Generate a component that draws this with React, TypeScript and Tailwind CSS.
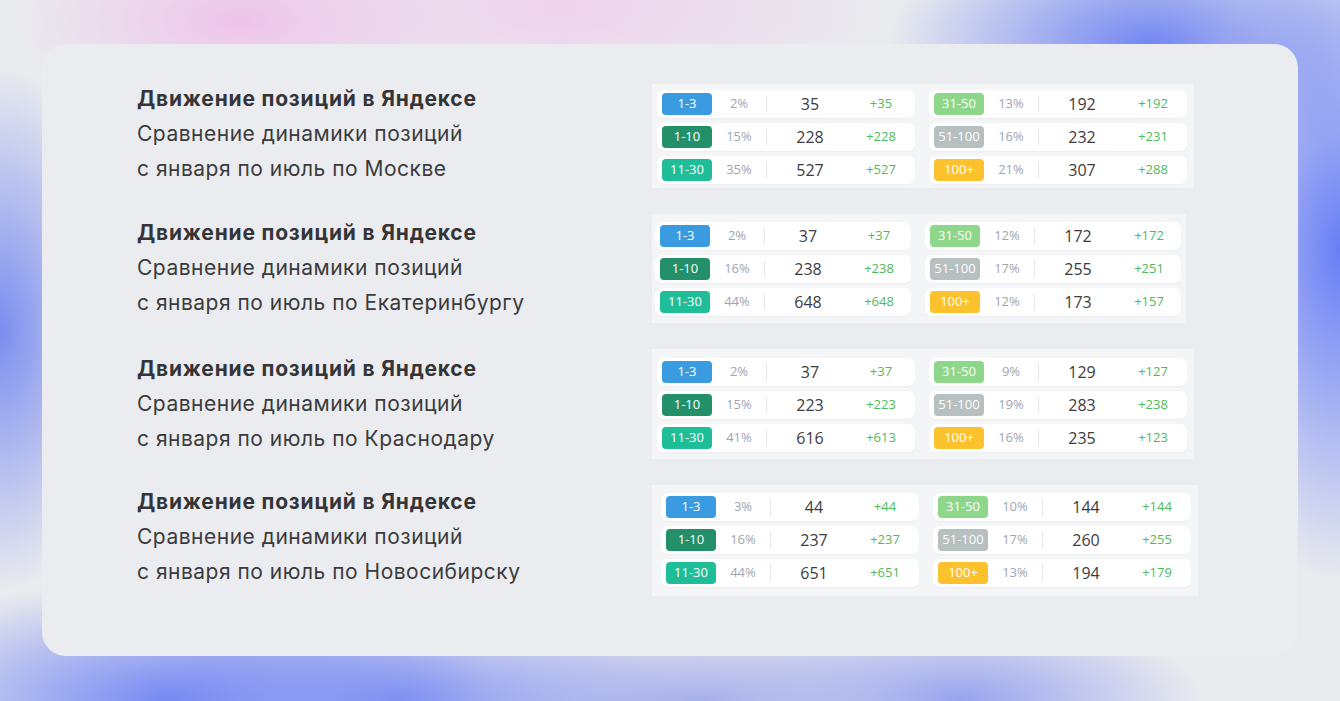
import React from 'react'

type Row = { range: string; pct: string; value: string; delta: string }

type Block = {
  city: string
  width: string
  pad: string
  textOffset: string
  left: Row[]
  right: Row[]
}

const badgeColors: Record<string, string> = {
  '1-3': 'bg-[#3a9be0]',
  '1-10': 'bg-[#24906a]',
  '11-30': 'bg-[#1fbe99]',
  '31-50': 'bg-[#8ed68a]',
  '51-100': 'bg-[#b6c0c0]',
  '100+': 'bg-[#fcc22e]',
}

const blocks: Block[] = [
  {
    city: 'с января по июль по Москве',
    width: 'w-[542px]',
    pad: 'pl-[5px] pr-[7px] pt-[6px] pb-[4px]',
    textOffset: '-mt-[3px]',
    left: [
      { range: '1-3', pct: '2%', value: '35', delta: '+35' },
      { range: '1-10', pct: '15%', value: '228', delta: '+228' },
      { range: '11-30', pct: '35%', value: '527', delta: '+527' },
    ],
    right: [
      { range: '31-50', pct: '13%', value: '192', delta: '+192' },
      { range: '51-100', pct: '16%', value: '232', delta: '+231' },
      { range: '100+', pct: '21%', value: '307', delta: '+288' },
    ],
  },
  {
    city: 'с января по июль  по Екатеринбургу',
    width: 'w-[534px]',
    pad: 'pl-[3px] pr-[5px] pt-[8px] pb-[7px]',
    textOffset: 'mt-[1px]',
    left: [
      { range: '1-3', pct: '2%', value: '37', delta: '+37' },
      { range: '1-10', pct: '16%', value: '238', delta: '+238' },
      { range: '11-30', pct: '44%', value: '648', delta: '+648' },
    ],
    right: [
      { range: '31-50', pct: '12%', value: '172', delta: '+172' },
      { range: '51-100', pct: '17%', value: '255', delta: '+251' },
      { range: '100+', pct: '12%', value: '173', delta: '+157' },
    ],
  },
  {
    city: 'с января по июль по Краснодару',
    width: 'w-[542px]',
    pad: 'pl-[5px] pr-[7px] pt-[9px] pb-[7px]',
    textOffset: 'mt-[2px]',
    left: [
      { range: '1-3', pct: '2%', value: '37', delta: '+37' },
      { range: '1-10', pct: '15%', value: '223', delta: '+223' },
      { range: '11-30', pct: '41%', value: '616', delta: '+613' },
    ],
    right: [
      { range: '31-50', pct: '9%', value: '129', delta: '+127' },
      { range: '51-100', pct: '19%', value: '283', delta: '+238' },
      { range: '100+', pct: '16%', value: '235', delta: '+123' },
    ],
  },
  {
    city: 'с января по июль по Новосибирску',
    width: 'w-[546px]',
    pad: 'pl-[9px] pr-[7px] pt-[8px] pb-[9px]',
    textOffset: '-mt-[1px]',
    left: [
      { range: '1-3', pct: '3%', value: '44', delta: '+44' },
      { range: '1-10', pct: '16%', value: '237', delta: '+237' },
      { range: '11-30', pct: '44%', value: '651', delta: '+651' },
    ],
    right: [
      { range: '31-50', pct: '10%', value: '144', delta: '+144' },
      { range: '51-100', pct: '17%', value: '260', delta: '+255' },
      { range: '100+', pct: '13%', value: '194', delta: '+179' },
    ],
  },
]

const StatRow = ({ row }: { row: Row }) => {
  return (
    <div className="flex h-[28px] items-center rounded-[7px] bg-white pl-[5px] shadow-[0_1px_2px_rgba(0,0,0,0.04)]">
      <span
        className={`${badgeColors[row.range]} flex h-[22px] w-[50px] shrink-0 items-center justify-center rounded-[4px] text-[13px] font-medium text-white`}
      >
        {row.range}
      </span>
      <span className="w-[54px] text-center text-[13px] text-[#a0a5b0]">{row.pct}</span>
      <span className="h-[16px] w-px bg-[#e3e5e9]" />
      <span className="-mt-px w-[86px] text-center text-[16px] text-[#3c3c3e]">{row.value}</span>
      <span className="w-[56px] text-center text-[13px] text-[#4fba5a]">{row.delta}</span>
    </div>
  )
}

const StatColumn = ({ rows }: { rows: Row[] }) => {
  return (
    <div className="flex flex-1 flex-col gap-[5px]">
      {rows.map((row, index) => (
        <StatRow key={index} row={row} />
      ))}
    </div>
  )
}

const PositionBlock = ({ block }: { block: Block }) => {
  return (
    <div className="flex items-start">
      <div
        className={`${block.textOffset} w-[515px] shrink-0 text-[21px] leading-[35px] tracking-[0.5px] text-[#3b3b3d]`}
      >
        <div className="text-[21px] font-bold tracking-[0.8px] text-[#353537]">
          Движение позиций в Яндексе
        </div>
        <div>Сравнение динамики позиций</div>
        <div>{block.city}</div>
      </div>
      <div
        className={`${block.width} ${block.pad} flex gap-[14px] bg-[#f4f5f7] font-['Open_Sans',sans-serif]`}
      >
        <StatColumn rows={block.left} />
        <StatColumn rows={block.right} />
      </div>
    </div>
  )
}

export default function App() {
  return (
    <div className="h-[701px] w-full overflow-hidden bg-[#e9eaee] bg-[radial-gradient(ellipse_220px_100px_at_240px_20px,#eec4ea_0%,transparent_100%),radial-gradient(ellipse_320px_110px_at_560px_10px,#eed2ec_0%,transparent_100%),radial-gradient(ellipse_260px_130px_at_1150px_45px,#7286f2_0%,transparent_100%),radial-gradient(ellipse_150px_330px_at_1340px_250px,#687ef6_0%,transparent_100%),radial-gradient(ellipse_130px_260px_at_0px_330px,#7a8def_0%,transparent_100%),radial-gradient(ellipse_320px_120px_at_170px_700px,#7789f3_0%,transparent_100%),radial-gradient(ellipse_280px_100px_at_400px_700px,#8393f2_0%,transparent_100%),radial-gradient(ellipse_240px_90px_at_700px_705px,#a4adeb_0%,transparent_100%),radial-gradient(ellipse_240px_90px_at_960px_700px,#98a3ee_0%,transparent_100%)] px-[42px] pt-[44px] font-['Inter',sans-serif]">
      <div className="flex h-[612px] flex-col gap-[26px] rounded-[24px] bg-[#ebecf0] pl-[95px] pt-[40px]">
        {blocks.map((block, index) => (
          <PositionBlock key={index} block={block} />
        ))}
      </div>
    </div>
  )
}
